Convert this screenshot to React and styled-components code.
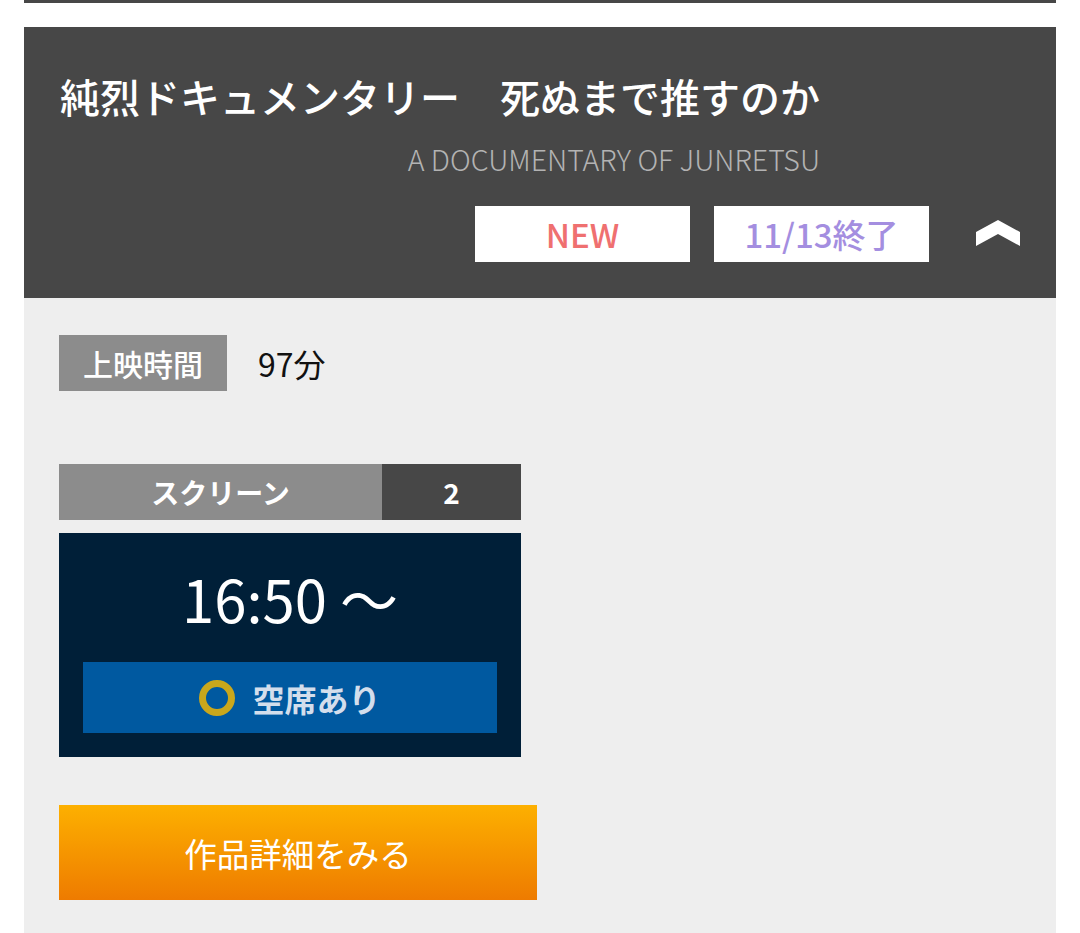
import React from 'react';
import styled, { createGlobalStyle } from 'styled-components';

const GlobalStyle = createGlobalStyle`
  html, body { margin: 0; padding: 0; background: #fff; }
  body { font-family: "Noto Sans CJK JP", "Noto Sans", sans-serif; }
  * { box-sizing: border-box; }
`;

const Page = styled.div`padding: 0 24px;`;
const PrevEdge = styled.div`height: 3px; background: #474747; margin-bottom: 24px;`;

const Card = styled.section`display: flex; flex-direction: column;`;

const Header = styled.header`
  background: #474747;
  padding: 45px 36px 36px 36px;
  display: flex;
  flex-direction: column;
`;
const TitleBlock = styled.div`display: inline-flex; flex-direction: column; align-items: flex-end; align-self: flex-start;`;
const Title = styled.h2`
  margin: 0;
  color: #fff;
  font-size: 40px;
  font-weight: 500;
  line-height: 1.2;
  letter-spacing: 0;
`;
const Subtitle = styled.div`
  margin-top: 22px;
  color: #b3b3b3;
  font-size: 28.5px;
  font-weight: 300;
  line-height: 1.2;
`;
const BadgeRow = styled.div`
  margin-top: 30px;
  display: flex;
  justify-content: flex-end;
  align-items: center;
  gap: 24px;
`;
const Badge = styled.div`
  width: 215px;
  height: 56px;
  background: #fff;
  color: ${p => p.color};
  font-size: 33px;
  font-weight: 500;
  display: flex;
  align-items: center;
  justify-content: center;
`;
const Toggle = styled.button`
  margin-left: 23px;
  border: 0;
  background: none;
  padding: 0;
  width: 44px;
  height: 56px;
  display: flex;
  align-items: center;
  justify-content: center;
`;

const Body = styled.div`
  background: #eeeeee;
  padding: 37px 35px 40px;
  display: flex;
  flex-direction: column;
  align-items: flex-start;
`;
const InfoRow = styled.div`display: flex; align-items: center; gap: 31px;`;
const InfoLabel = styled.div`
  width: 168px;
  height: 56px;
  background: #8c8c8c;
  color: #fff;
  font-size: 30px;
  font-weight: 500;
  display: flex;
  align-items: center;
  justify-content: center;
`;
const InfoValue = styled.div`font-size: 32px; color: #111; font-weight: 400;`;

const Schedule = styled.div`margin-top: 73px; width: 462px; display: flex; flex-direction: column; gap: 13px;`;
const ScreenBar = styled.div`display: flex; height: 56px;`;
const ScreenCell = styled.div`
  flex: ${p => (p.wide ? '0 0 323px' : '1')};
  background: ${p => (p.wide ? '#8c8c8c' : '#474747')};
  color: #fff;
  font-size: 28px;
  font-weight: 700;
  display: flex;
  align-items: center;
  justify-content: center;
`;
const Showtime = styled.div`
  background: #001f38;
  padding: 30px 24px 24px;
  display: flex;
  flex-direction: column;
  align-items: center;
`;
const Time = styled.div`color: #fff; font-size: 58px; font-weight: 400; line-height: 1; height: 70px; display: flex; align-items: center;`;
const Status = styled.div`
  margin-top: 29px;
  align-self: stretch;
  height: 71px;
  background: #0059a0;
  display: flex;
  align-items: center;
  justify-content: center;
  gap: 17px;
  color: #d3deec;
  font-size: 32px;
  font-weight: 700;
`;

const DetailButton = styled.a`
  margin-top: 48px;
  width: 478px;
  height: 95px;
  background: linear-gradient(to bottom, #fdb000, #ee7b00);
  color: #fff;
  font-size: 32.5px;
  font-weight: 400;
  display: flex;
  align-items: center;
  justify-content: center;
  text-decoration: none;
`;

const Chevron = () => (
  <svg width="44" height="28" viewBox="0 0 44 28">
    <polygon points="0,12 22,0 44,12 44,26 22,14 0,26" fill="#fff" />
  </svg>
);

const Ring = () => (
  <svg width="36" height="36" viewBox="0 0 36 36">
    <circle cx="18" cy="18" r="14.5" fill="none" stroke="#c9a71c" strokeWidth="7" />
  </svg>
);

export default function App() {
  return (
    <Page>
      <GlobalStyle />
      <PrevEdge />
      <Card>
        <Header>
          <TitleBlock>
            <Title>純烈ドキュメンタリー　死ぬまで推すのか</Title>
            <Subtitle>A DOCUMENTARY OF JUNRETSU</Subtitle>
          </TitleBlock>
          <BadgeRow>
            <Badge color="#ef7070">NEW</Badge>
            <Badge color="#a48ee0">11/13終了</Badge>
            <Toggle aria-label="閉じる"><Chevron /></Toggle>
          </BadgeRow>
        </Header>
        <Body>
          <InfoRow>
            <InfoLabel>上映時間</InfoLabel>
            <InfoValue>97分</InfoValue>
          </InfoRow>
          <Schedule>
            <ScreenBar>
              <ScreenCell wide>スクリーン</ScreenCell>
              <ScreenCell>2</ScreenCell>
            </ScreenBar>
            <Showtime>
              <Time>16:50 〜</Time>
              <Status><Ring />空席あり</Status>
            </Showtime>
          </Schedule>
          <DetailButton href="#">作品詳細をみる</DetailButton>
        </Body>
      </Card>
    </Page>
  );
}
